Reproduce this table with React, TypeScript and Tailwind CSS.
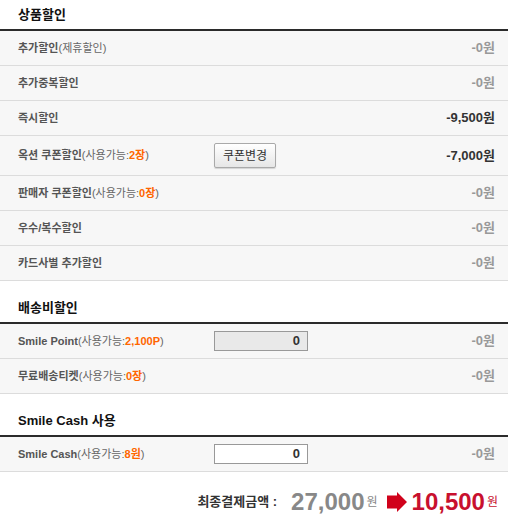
import React from "react";

const font = { fontFamily: "'Liberation Sans', 'Noto Sans CJK KR', sans-serif" };

type Row = {
  label: string;
  note?: React.ReactNode;
  value: string;
  strong?: boolean;
  extra?: React.ReactNode;
  tall?: boolean;
};

const Avail = ({ v }: { v: string }) => (
  <span className="font-normal text-[#666]">
    (사용가능:<b className="text-[#ff6600]">{v}</b>)
  </span>
);

const Section = ({ title, rows }: { title: string; rows: Row[] }) => (
  <div>
    <h3 className="h-[29px] flex items-center pl-[18px] text-[13px] font-bold text-[#111]">{title}</h3>
    <div className="border-t-2 border-[#2b2b2b]">
      {rows.map((r, i) => (
        <div
          key={i}
          className={`flex items-center bg-[#f7f7f7] border-b border-[#dcdcdc] pl-[18px] pr-[13px] ${
            r.tall ? "h-[40px]" : "h-[35px]"
          }`}
        >
          <div className="w-[196px] text-[11px] font-bold text-[#555] whitespace-nowrap">
            {r.label}
            {r.note}
          </div>
          <div className="w-[94px]">{r.extra}</div>
          <div
            className={`ml-auto text-[13px] font-bold ${r.strong ? "text-[#333]" : "text-[#999]"}`}
          >
            {r.value}
          </div>
        </div>
      ))}
    </div>
  </div>
);

const Arrow = () => (
  <svg width="20" height="20" viewBox="0 0 20 20" className="ml-[9px] mr-[5px]">
    <path d="M0 3.5 H10 V0 L20 10 L10 20 V16.5 H0 Z" fill="#d0021b" />
  </svg>
);

export default function App() {
  const couponBtn = (
    <button className="w-[62px] h-[25px] text-[12px] text-[#333] border border-[#a9a9a9] rounded-[2px] bg-gradient-to-b from-white to-[#e6e6e6] shadow-[0_1px_1px_rgba(0,0,0,0.15)]">
      쿠폰변경
    </button>
  );

  return (
    <div className="w-[508px] bg-white text-[#333]" style={font}>
      <Section
        title="상품할인"
        rows={[
          { label: "추가할인", note: <span className="font-normal text-[#666]">(제휴할인)</span>, value: "-0원" },
          { label: "추가중복할인", value: "-0원" },
          { label: "즉시할인", value: "-9,500원", strong: true },
          { label: "옥션 쿠폰할인", note: <Avail v="2장" />, value: "-7,000원", strong: true, extra: couponBtn, tall: true },
          { label: "판매자 쿠폰할인", note: <Avail v="0장" />, value: "-0원" },
          { label: "우수/복수할인", value: "-0원" },
          { label: "카드사별 추가할인", value: "-0원" },
        ]}
      />
      <div className="mt-[12px]">
        <Section
          title="배송비할인"
          rows={[
            {
              label: "Smile Point",
              note: <Avail v="2,100P" />,
              value: "-0원",
              extra: (
                <div className="h-[20px] border border-[#999] bg-[#e9e9e9] text-right pr-[7px] text-[13px] font-bold leading-[18px]">0</div>
              ),
            },
            { label: "무료배송티켓", note: <Avail v="0장" />, value: "-0원" },
          ]}
        />
      </div>
      <div className="mt-[12px]">
        <Section
          title="Smile Cash 사용"
          rows={[
            {
              label: "Smile Cash",
              note: <Avail v="8원" />,
              value: "-0원",
              extra: (
                <div className="h-[20px] border border-[#999] bg-white text-right pr-[7px] text-[13px] font-bold leading-[18px]">0</div>
              ),
            },
          ]}
        />
      </div>
      <div className="flex items-center justify-end pr-[10px] h-[58px] pt-[2px]">
        <span className="text-[13px] font-bold text-[#333] mr-[14px]">최종결제금액 :</span>
        <span className="text-[24px] font-bold text-[#888] leading-none">27,000</span>
        <span className="text-[12px] text-[#888] self-end mb-[19px] ml-[2px]">원</span>
        <Arrow />
        <span className="text-[24px] font-bold text-[#c8102e] leading-none">10,500</span>
        <span className="text-[12px] text-[#c8102e] self-end mb-[19px] ml-[2px]">원</span>
      </div>
    </div>
  );
}
